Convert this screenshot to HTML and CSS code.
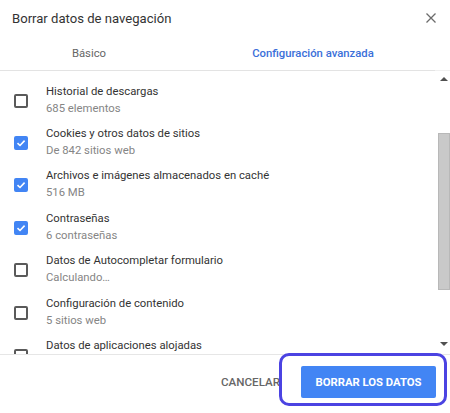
FILE: index.html
```html
<!DOCTYPE html>
<html lang="es">
<head>
<meta charset="utf-8">
<link rel="stylesheet" href="styles.css">
</head>
<body>
<div class="dialog">
  <div class="header">
    <span class="title">Borrar datos de navegación</span>
    <svg class="close" width="10" height="10" viewBox="0 0 10 10"><path d="M0.5 0.5L9.5 9.5M9.5 0.5L0.5 9.5" stroke="#6b6b6b" stroke-width="1.3" fill="none"/></svg>
  </div>
  <div class="tabs">
    <div class="tab tab-basic">Básico</div>
    <div class="tab tab-adv">Configuración avanzada</div>
  </div>
  <div class="tab-rule"><div class="rule-main"></div><div class="rule-side"></div></div>
  <div class="body">
    <div class="list">
      <div class="item">
        <span class="cb"></span>
        <div class="texts"><div class="t">Historial de descargas</div><div class="s">685 elementos</div></div>
      </div>
      <div class="item">
        <span class="cb on"><svg width="10" height="10" viewBox="0 0 10 10"><path d="M1.5 5.2L4 7.5L8.6 2.6" stroke="#fff" stroke-width="1.6" fill="none"/></svg></span>
        <div class="texts"><div class="t">Cookies y otros datos de sitios</div><div class="s">De 842 sitios web</div></div>
      </div>
      <div class="item">
        <span class="cb on"><svg width="10" height="10" viewBox="0 0 10 10"><path d="M1.5 5.2L4 7.5L8.6 2.6" stroke="#fff" stroke-width="1.6" fill="none"/></svg></span>
        <div class="texts"><div class="t">Archivos e imágenes almacenados en caché</div><div class="s">516 MB</div></div>
      </div>
      <div class="item">
        <span class="cb on"><svg width="10" height="10" viewBox="0 0 10 10"><path d="M1.5 5.2L4 7.5L8.6 2.6" stroke="#fff" stroke-width="1.6" fill="none"/></svg></span>
        <div class="texts"><div class="t">Contraseñas</div><div class="s">6 contraseñas</div></div>
      </div>
      <div class="item">
        <span class="cb"></span>
        <div class="texts"><div class="t">Datos de Autocompletar formulario</div><div class="s">Calculando…</div></div>
      </div>
      <div class="item">
        <span class="cb"></span>
        <div class="texts"><div class="t">Configuración de contenido</div><div class="s">5 sitios web</div></div>
      </div>
      <div class="item item-last">
        <span class="cb"></span>
        <div class="texts"><div class="t">Datos de aplicaciones alojadas</div></div>
      </div>
    </div>
    <div class="scrollbar">
      <div class="arrow up"></div>
      <div class="track"><div class="thumb"></div></div>
      <div class="arrow down"></div>
    </div>
  </div>
  <div class="footer">
    <button class="btn-cancel">CANCELAR</button>
    <button class="btn-primary">BORRAR LOS DATOS</button>
    <div class="highlight"></div>
  </div>
</div>
</body>
</html>
```
FILE: styles.css
```css
* { box-sizing: border-box; }
html, body { margin: 0; padding: 0; background: #fff; }
body { font-family: Roboto, "Noto Sans", Arial, sans-serif; color: #333; width: 450px; height: 413px; overflow: hidden; }
.dialog { width: 450px; height: 413px; display: flex; flex-direction: column; position: relative; }
.header { height: 36px; display: flex; align-items: center; justify-content: space-between; padding: 0 14px 0 12px; }
.title { font-size: 13.1px; color: #333; }
.close { display: block; }
.tabs { height: 34px; display: flex; align-items: center; font-size: 11.3px; }
.tab { text-align: center; }
.tab-basic { width: 178px; color: #666; }
.tab-adv { flex: 1; color: #3b6fd9; font-weight: 500; padding-right: 2px; }
.tab-rule { height: 1px; display: flex; }
.rule-main { width: 435px; background: #e3e3e3; }
.rule-side { flex: 1; background: #f0f0f0; }
.body { height: 284px; display: flex; border-bottom: 1px solid #e6e6e6; overflow: hidden; }
.list { flex: 1; padding-top: 7.5px; overflow: hidden; }
.item { display: flex; align-items: center; height: 42.4px; padding-left: 14px; }
.item-last { align-items: flex-start; padding-top: 4px; }
.item-last .cb { margin-top: 12px; }
.cb { width: 14px; height: 14px; border: 2px solid #5a5a5a; border-radius: 2px; flex: none; margin-top: 2px; display: flex; align-items: center; justify-content: center; }
.cb.on { background: #4285f4; border-color: #4285f4; }
.cb svg { display: block; }
.texts { margin-left: 18px; }
.t { font-size: 11.3px; line-height: 17px; color: #333; }
.s { font-size: 11.3px; line-height: 17px; color: #858585; }
.scrollbar { width: 14px; display: flex; flex-direction: column; align-items: center; }
.arrow { width: 0; height: 0; border-left: 4px solid transparent; border-right: 4px solid transparent; }
.arrow.up { border-bottom: 4px solid #505050; margin-top: 6px; margin-left: 2px; }
.arrow.down { border-top: 4px solid #505050; margin-top: 52px; margin-left: 2px; }
.track { width: 14px; padding-top: 52px; display: flex; justify-content: flex-end; }
.thumb { width: 12px; height: 157px; background: #c9c9c9; border: 1px solid #b8b8b8; }
.footer { flex: 1; display: flex; align-items: center; justify-content: flex-end; padding: 0 14px 4px 0; position: relative; }
.btn-cancel { background: none; border: none; font-family: inherit; font-size: 11.6px; font-weight: 500; color: #666; padding: 0; margin-right: 21px; }
.btn-primary { width: 135px; height: 32px; background: #4285f4; color: #fff; border: none; border-radius: 2px; font-family: inherit; font-size: 11.3px; font-weight: 700; padding: 0; }
.highlight { position: absolute; left: 279px; top: -2px; width: 168px; height: 53px; border: 3px solid #4b43e2; border-radius: 10px; pointer-events: none; }
```
